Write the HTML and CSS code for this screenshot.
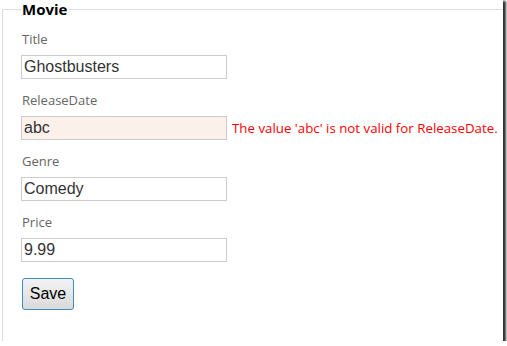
FILE: index.html
```html
<!DOCTYPE html>
<html>
<head>
<meta name="viewport" content="width=device-width, initial-scale=1">
<link rel="stylesheet" href="styles.css">
</head>
<body>

<div class="shot">
	<fieldset class="movie">
		<legend>Movie</legend>

		<div class="label">Title</div>
		<div class="row"><input class="text-box" type="text" value="Ghostbusters"></div>

		<div class="label">ReleaseDate</div>
		<div class="row">
			<input class="text-box invalid" type="text" value="abc">
			<span class="error">The value 'abc' is not valid for ReleaseDate.</span>
		</div>

		<div class="label">Genre</div>
		<div class="row"><input class="text-box" type="text" value="Comedy"></div>

		<div class="label">Price</div>
		<div class="row"><input class="text-box" type="text" value="9.99"></div>

		<div class="actions"><button class="save" type="button">Save</button></div>
	</fieldset>
</div>

</body>
</html>
```

FILE: styles.css
```css
body {
	margin: 0;
	background: #fff;
	font-family: "Open Sans", "Noto Sans", sans-serif;
}

.shot {
	width: 503px;
	height: 341px;
	overflow: hidden;
	background: #fff;
	box-shadow: 2px 2px 2px 1px rgba(0, 0, 0, 0.8);
	padding-left: 2px;
	box-sizing: border-box;
}

.movie {
	width: 540px;
	height: 400px;
	margin: 0;
	padding: 0 0 0 18px;
	border: 1px solid #dcdcdc;
	box-sizing: border-box;
}

.movie legend {
	margin-left: 0;
	padding: 0 2px 0 1px;
	font-size: 15px;
	font-weight: bold;
	line-height: 18px;
	color: #000;
}

.label {
	height: 18px;
	line-height: 18px;
	margin: 12px 0 7px 1px;
	font-size: 13px;
	color: #666;
}

.row {
	display: flex;
	align-items: center;
	height: 24px;
}

.text-box {
	width: 206px;
	height: 24px;
	box-sizing: border-box;
	margin: 0;
	padding: 0 2px;
	border: 1px solid #ccc;
	font-family: "Liberation Sans", Arial, sans-serif;
	font-size: 16px;
	color: #333;
	background: #fff;
	outline: none;
}

.text-box.invalid {
	background: #fbf0ea;
}

.error {
	margin-left: 5px;
	font-size: 13.3px;
	color: #f00;
	white-space: nowrap;
}

.actions {
	margin-top: 16px;
	padding-left: 1px;
}

.save {
	width: 52px;
	height: 32px;
	margin: 0;
	padding: 0;
	border: 1px solid #3c8dc0;
	border-radius: 3px;
	background: linear-gradient(#f3f3f3, #dadada);
	font-family: "Liberation Sans", Arial, sans-serif;
	font-size: 16px;
	color: #000;
}
```
